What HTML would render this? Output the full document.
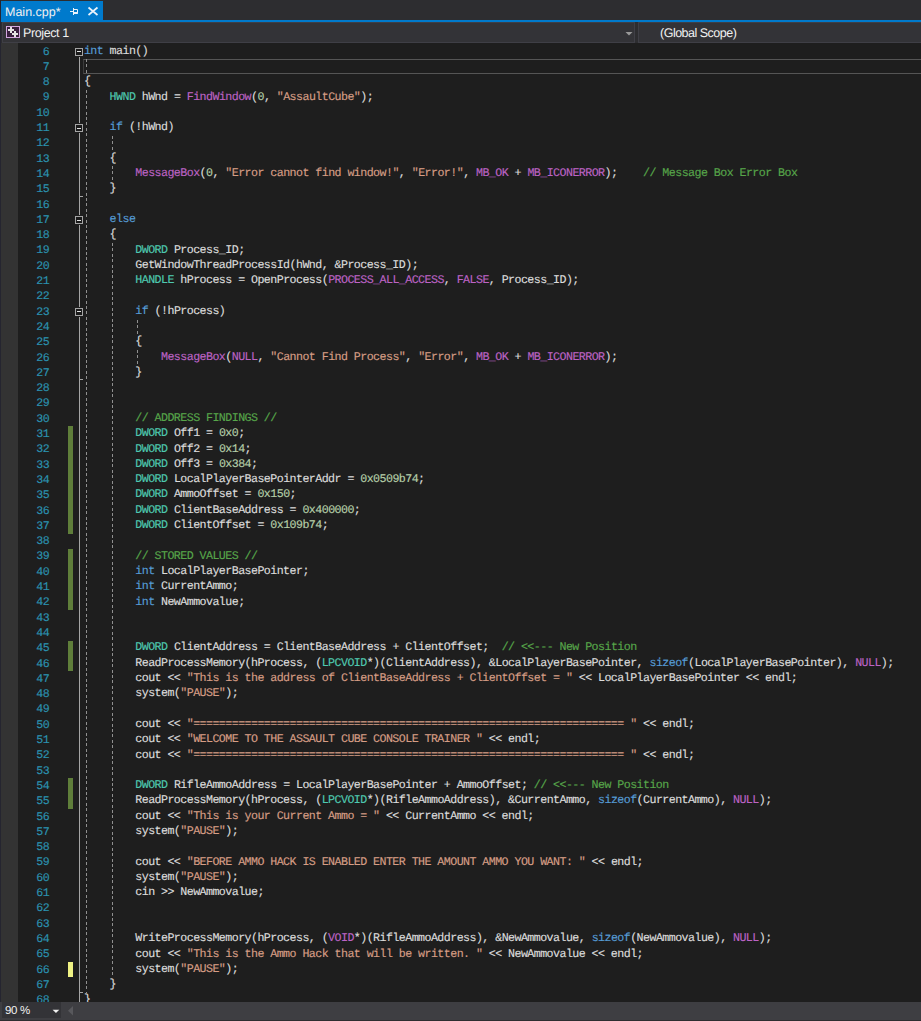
<!DOCTYPE html>
<html><head><meta charset="utf-8"><title>Main.cpp</title><style>
*{margin:0;padding:0;box-sizing:border-box}
html,body{width:921px;height:1021px;overflow:hidden;background:#1e1e1e;text-rendering:geometricPrecision}
body{position:relative;font-family:"Liberation Sans",sans-serif}
.abs{position:absolute}
.tabbar{left:0;top:0;width:921px;height:20px;background:#2d2d30}
.tab{left:0;top:1px;width:103px;height:21px;background:#007acc}
.tabline{left:0;top:20px;width:921px;height:2px;background:#007acc}
.tabtxt{left:5px;top:5px;font-size:12.5px;color:#f0f0f0;white-space:pre}
.nav{left:0;top:22px;width:921px;height:21px;background:#2d2d30}
.ddbox{top:22px;height:21px;background:#333337;border:1px solid #3f3f46}
.lborder{left:0;top:0;width:1px;height:1021px;background:#252530}
.navtxt{font-size:12.5px;color:#f1f1f1;white-space:pre}
.margin{left:0;top:43px;width:18px;height:959px;background:#333333}
.ln{position:absolute;width:50px;text-align:right;color:#2b91af;-webkit-text-stroke:0.15px currentColor;font-family:"Liberation Mono",monospace;white-space:pre;line-height:15.3px;height:15.3px}
.cd{position:absolute;white-space:pre;color:#dcdcdc;-webkit-text-stroke:0.15px currentColor;font-family:"Liberation Mono",monospace;line-height:15.3px;height:15.3px}
i{font-style:normal}
.k{color:#569cd6}.t{color:#4ec9b0}.m{color:#bd63c5}.s{color:#d69d85}.c{color:#57a64a}.n{color:#b5cea8}
.chg{position:absolute;left:68px;width:4.5px;background:#5f7e3a}
.chg.y{background:#eff284}
.fb{position:absolute;left:75px;width:8px;height:8px;border:1px solid #a5a5a5;background:#1a1a1a;box-shadow:0 0 0 1px #1e1e1e}
.fb::after{content:"";position:absolute;left:1px;top:2.5px;width:4px;height:1px;background:#e0e0e0}
.fl{position:absolute;left:79px;width:1px;background:#a5a5a5}
.ft{position:absolute;left:79px;width:4px;height:1px;background:#a5a5a5}
.ig{position:absolute;width:1px;background:repeating-linear-gradient(to bottom,#909090 0,#909090 2.9px,transparent 2.9px,transparent 5.4px)}
.curline{position:absolute;left:83px;width:838px;height:15px;border:1px solid #555555;border-left-color:#3c3c3c;border-right:none}
.status{left:0;top:1002px;width:921px;height:19px;background:#3e3e42}
.zoombox{left:2px;top:1002px;width:59px;height:16px;background:#333337}
.statusbot{left:0;top:1020px;width:921px;height:1px;background:#2d2d30}

.ln{left:-0.8px;font-size:11.65px;letter-spacing:-0.559px;}
.cd{left:83.9px;font-size:11.65px;letter-spacing:-0.559px;}
.curline{top:58.9px;}

</style></head><body>
<div class="abs tabbar"></div>
<div class="abs tab"></div>
<div class="abs tabline"></div>
<div class="abs tabtxt">Main.cpp*</div>
<svg class="abs" style="left:0;top:0" width="110" height="22" viewBox="0 0 110 22">
<g fill="none" stroke="#eaf3fb" stroke-width="1">
<path d="M70 11.5H73.5M73.5 8V15M73.5 9.5H77.5V13.5H73.5"/>
</g>
<rect x="74" y="12" width="4" height="1.6" fill="#eaf3fb"/>
<path d="M88.5 7.5L97.5 15M97.5 7.5L88.5 15" stroke="#eaf3fb" stroke-width="1.7" fill="none"/>
</svg>
<div class="abs nav"></div>
<div class="abs ddbox" style="left:2px;width:633px"></div>
<div class="abs ddbox" style="left:638px;width:290px"></div>
<svg class="abs" style="left:5px;top:25px" width="16" height="14" viewBox="0 0 16 14">
<rect x="1.5" y="1.5" width="13" height="11" fill="#3a203f" stroke="#d2a6de" stroke-width="1"/>
<path d="M6 2V8M3 5H9M10 6V12M7 9H13" stroke="#e4e4e4" stroke-width="2" fill="none"/>
</svg>
<div class="abs navtxt" style="left:23px;top:26px;letter-spacing:-0.4px">Project 1</div>
<svg class="abs" style="left:624px;top:30px" width="10" height="8" viewBox="0 0 10 8"><path d="M1.5 2H8.5L5 5.5Z" fill="#999999"/></svg>
<div class="abs navtxt" style="left:660px;top:26px;letter-spacing:-0.5px">(Global Scope)</div>
<div class="abs margin"></div>
<div class="abs lborder"></div>
<div class="curline"></div>
<div class="chg" style="top:426.35px;height:107.17px"></div>
<div class="chg" style="top:548.83px;height:61.24px"></div>
<div class="chg" style="top:640.69px;height:30.62px"></div>
<div class="chg" style="top:778.48px;height:30.62px"></div>
<div class="chg y" style="top:962.20px;height:15.31px"></div>
<div class="fl" style="top:56.60px;height:945.40px"></div>
<div class="ft" style="top:195.70px"></div>
<div class="ft" style="top:379.42px"></div>
<div class="ft" style="top:991.82px"></div>
<div class="fb" style="top:47.60px"></div>
<div class="fb" style="top:124.15px"></div>
<div class="fb" style="top:216.01px"></div>
<div class="fb" style="top:307.87px"></div>
<div class="ig" style="left:86.00px;top:59.31px;height:14.91px"></div>
<div class="ig" style="left:86.00px;top:89.93px;height:902.89px"></div>
<div class="ig" style="left:112.00px;top:135.86px;height:14.91px"></div>
<div class="ig" style="left:112.00px;top:166.48px;height:14.91px"></div>
<div class="ig" style="left:112.00px;top:243.03px;height:734.48px"></div>
<div class="ig" style="left:137.00px;top:319.58px;height:14.91px"></div>
<div class="ig" style="left:137.00px;top:350.20px;height:14.91px"></div>
<div class="ln" style="top:45px">6</div>
<div class="cd" style="top:44px"><i class="k">int</i> main()</div>
<div class="ln" style="top:60px">7</div>
<div class="ln" style="top:75px">8</div>
<div class="cd" style="top:74px">{</div>
<div class="ln" style="top:90px">9</div>
<div class="cd" style="top:90px">    <i class="t">HWND</i> hWnd = <i class="m">FindWindow</i>(<i class="n">0</i>, <i class="s">"AssaultCube"</i>);</div>
<div class="ln" style="top:106px">10</div>
<div class="ln" style="top:121px">11</div>
<div class="cd" style="top:120px">    <i class="k">if</i> (!hWnd)</div>
<div class="ln" style="top:136px">12</div>
<div class="ln" style="top:152px">13</div>
<div class="cd" style="top:151px">    {</div>
<div class="ln" style="top:167px">14</div>
<div class="cd" style="top:166px">        <i class="m">MessageBox</i>(<i class="n">0</i>, <i class="s">"Error cannot find window!"</i>, <i class="s">"Error!"</i>, <i class="m">MB_OK</i> + <i class="m">MB_ICONERROR</i>);    <i class="c">// Message Box Error Box</i></div>
<div class="ln" style="top:182px">15</div>
<div class="cd" style="top:181px">    }</div>
<div class="ln" style="top:198px">16</div>
<div class="ln" style="top:213px">17</div>
<div class="cd" style="top:212px">    <i class="k">else</i></div>
<div class="ln" style="top:228px">18</div>
<div class="cd" style="top:227px">    {</div>
<div class="ln" style="top:243px">19</div>
<div class="cd" style="top:243px">        <i class="t">DWORD</i> Process_ID;</div>
<div class="ln" style="top:259px">20</div>
<div class="cd" style="top:258px">        GetWindowThreadProcessId(hWnd, &amp;Process_ID);</div>
<div class="ln" style="top:274px">21</div>
<div class="cd" style="top:273px">        <i class="t">HANDLE</i> hProcess = OpenProcess(<i class="m">PROCESS_ALL_ACCESS</i>, <i class="m">FALSE</i>, Process_ID);</div>
<div class="ln" style="top:289px">22</div>
<div class="ln" style="top:305px">23</div>
<div class="cd" style="top:304px">        <i class="k">if</i> (!hProcess)</div>
<div class="ln" style="top:320px">24</div>
<div class="ln" style="top:335px">25</div>
<div class="cd" style="top:334px">        {</div>
<div class="ln" style="top:351px">26</div>
<div class="cd" style="top:350px">            <i class="m">MessageBox</i>(<i class="m">NULL</i>, <i class="s">"Cannot Find Process"</i>, <i class="s">"Error"</i>, <i class="m">MB_OK</i> + <i class="m">MB_ICONERROR</i>);</div>
<div class="ln" style="top:366px">27</div>
<div class="cd" style="top:365px">        }</div>
<div class="ln" style="top:381px">28</div>
<div class="ln" style="top:396px">29</div>
<div class="ln" style="top:412px">30</div>
<div class="cd" style="top:411px">        <i class="c">// ADDRESS FINDINGS //</i></div>
<div class="ln" style="top:427px">31</div>
<div class="cd" style="top:426px">        <i class="t">DWORD</i> Off1 = <i class="n">0x0</i>;</div>
<div class="ln" style="top:442px">32</div>
<div class="cd" style="top:442px">        <i class="t">DWORD</i> Off2 = <i class="n">0x14</i>;</div>
<div class="ln" style="top:458px">33</div>
<div class="cd" style="top:457px">        <i class="t">DWORD</i> Off3 = <i class="n">0x384</i>;</div>
<div class="ln" style="top:473px">34</div>
<div class="cd" style="top:472px">        <i class="t">DWORD</i> LocalPlayerBasePointerAddr = <i class="n">0x0509b74</i>;</div>
<div class="ln" style="top:488px">35</div>
<div class="cd" style="top:487px">        <i class="t">DWORD</i> AmmoOffset = <i class="n">0x150</i>;</div>
<div class="ln" style="top:504px">36</div>
<div class="cd" style="top:503px">        <i class="t">DWORD</i> ClientBaseAddress = <i class="n">0x400000</i>;</div>
<div class="ln" style="top:519px">37</div>
<div class="cd" style="top:518px">        <i class="t">DWORD</i> ClientOffset = <i class="n">0x109b74</i>;</div>
<div class="ln" style="top:534px">38</div>
<div class="ln" style="top:549px">39</div>
<div class="cd" style="top:549px">        <i class="c">// STORED VALUES //</i></div>
<div class="ln" style="top:565px">40</div>
<div class="cd" style="top:564px">        <i class="k">int</i> LocalPlayerBasePointer;</div>
<div class="ln" style="top:580px">41</div>
<div class="cd" style="top:579px">        <i class="k">int</i> CurrentAmmo;</div>
<div class="ln" style="top:595px">42</div>
<div class="cd" style="top:595px">        <i class="k">int</i> NewAmmovalue;</div>
<div class="ln" style="top:611px">43</div>
<div class="ln" style="top:626px">44</div>
<div class="ln" style="top:641px">45</div>
<div class="cd" style="top:640px">        <i class="t">DWORD</i> ClientAddress = ClientBaseAddress + ClientOffset;  <i class="c">// &lt;&lt;--- New Position</i></div>
<div class="ln" style="top:657px">46</div>
<div class="cd" style="top:656px">        ReadProcessMemory(hProcess, (<i class="t">LPCVOID</i>*)(ClientAddress), &amp;LocalPlayerBasePointer, <i class="k">sizeof</i>(LocalPlayerBasePointer), <i class="m">NULL</i>);</div>
<div class="ln" style="top:672px">47</div>
<div class="cd" style="top:671px">        cout &lt;&lt; <i class="s">"This is the address of ClientBaseAddress + ClientOffset = "</i> &lt;&lt; LocalPlayerBasePointer &lt;&lt; endl;</div>
<div class="ln" style="top:687px">48</div>
<div class="cd" style="top:686px">        system(<i class="s">"PAUSE"</i>);</div>
<div class="ln" style="top:702px">49</div>
<div class="ln" style="top:718px">50</div>
<div class="cd" style="top:717px">        cout &lt;&lt; <i class="s">"=================================================================== "</i> &lt;&lt; endl;</div>
<div class="ln" style="top:733px">51</div>
<div class="cd" style="top:732px">        cout &lt;&lt; <i class="s">"WELCOME TO THE ASSAULT CUBE CONSOLE TRAINER "</i> &lt;&lt; endl;</div>
<div class="ln" style="top:748px">52</div>
<div class="cd" style="top:748px">        cout &lt;&lt; <i class="s">"=================================================================== "</i> &lt;&lt; endl;</div>
<div class="ln" style="top:764px">53</div>
<div class="ln" style="top:779px">54</div>
<div class="cd" style="top:778px">        <i class="t">DWORD</i> RifleAmmoAddress = LocalPlayerBasePointer + AmmoOffset; <i class="c">// &lt;&lt;--- New Position</i></div>
<div class="ln" style="top:794px">55</div>
<div class="cd" style="top:793px">        ReadProcessMemory(hProcess, (<i class="t">LPCVOID</i>*)(RifleAmmoAddress), &amp;CurrentAmmo, <i class="k">sizeof</i>(CurrentAmmo), <i class="m">NULL</i>);</div>
<div class="ln" style="top:810px">56</div>
<div class="cd" style="top:809px">        cout &lt;&lt; <i class="s">"This is your Current Ammo = "</i> &lt;&lt; CurrentAmmo &lt;&lt; endl;</div>
<div class="ln" style="top:825px">57</div>
<div class="cd" style="top:824px">        system(<i class="s">"PAUSE"</i>);</div>
<div class="ln" style="top:840px">58</div>
<div class="ln" style="top:855px">59</div>
<div class="cd" style="top:855px">        cout &lt;&lt; <i class="s">"BEFORE AMMO HACK IS ENABLED ENTER THE AMOUNT AMMO YOU WANT: "</i> &lt;&lt; endl;</div>
<div class="ln" style="top:871px">60</div>
<div class="cd" style="top:870px">        system(<i class="s">"PAUSE"</i>);</div>
<div class="ln" style="top:886px">61</div>
<div class="cd" style="top:885px">        cin &gt;&gt; NewAmmovalue;</div>
<div class="ln" style="top:901px">62</div>
<div class="ln" style="top:917px">63</div>
<div class="ln" style="top:932px">64</div>
<div class="cd" style="top:931px">        WriteProcessMemory(hProcess, (<i class="m">VOID</i>*)(RifleAmmoAddress), &amp;NewAmmovalue, <i class="k">sizeof</i>(NewAmmovalue), <i class="m">NULL</i>);</div>
<div class="ln" style="top:947px">65</div>
<div class="cd" style="top:947px">        cout &lt;&lt; <i class="s">"This is the Ammo Hack that will be written. "</i> &lt;&lt; NewAmmovalue &lt;&lt; endl;</div>
<div class="ln" style="top:963px">66</div>
<div class="cd" style="top:962px">        system(<i class="s">"PAUSE"</i>);</div>
<div class="ln" style="top:978px">67</div>
<div class="cd" style="top:977px">    }</div>
<div class="ln" style="top:993px">68</div>
<div class="cd" style="top:992px">}</div>
<div class="abs status"></div>
<div class="abs zoombox"></div>
<div class="abs statusbot"></div>
<div class="abs navtxt" style="left:5px;top:1004.5px;font-size:11.5px;letter-spacing:-0.3px">90 %</div>
<svg class="abs" style="left:50px;top:1004px" width="40" height="14" viewBox="0 0 40 14">
<path d="M2.6 5.8H9.3L5.95 9.1Z" fill="#f1f1f1"/>
<path d="M23 2L23 11.5L18 6.75Z" fill="#58585c"/>
</svg>
</body></html>
